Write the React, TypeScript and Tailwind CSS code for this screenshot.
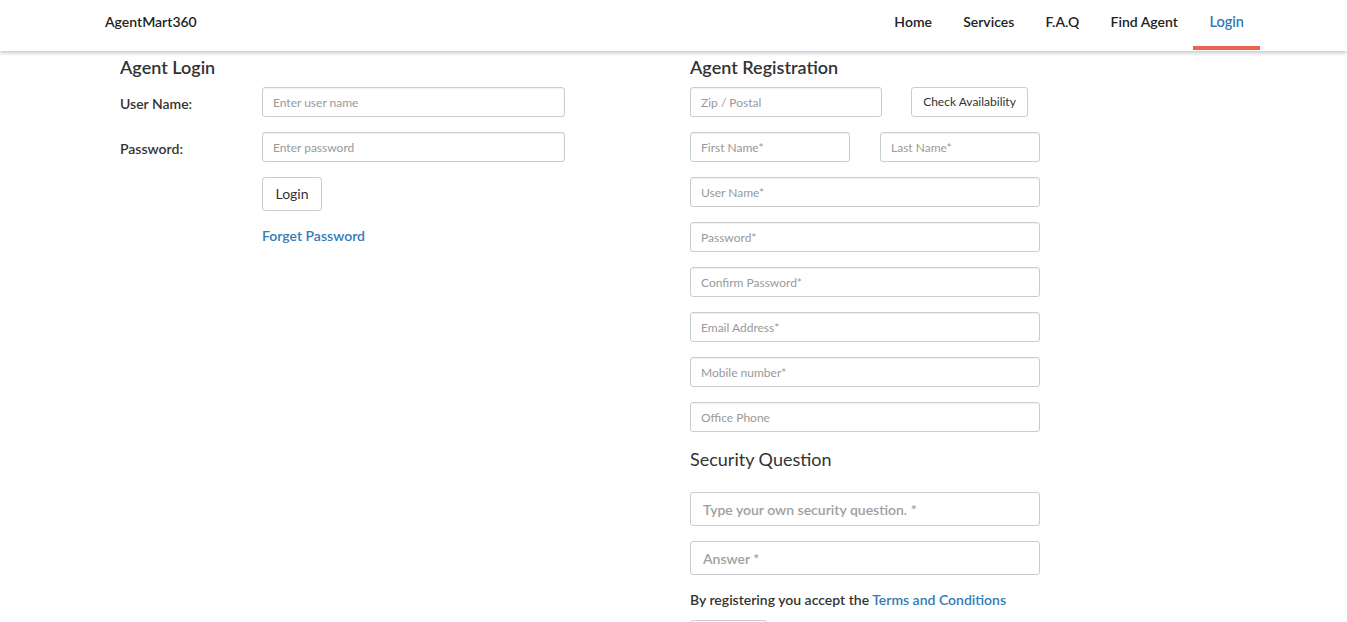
import React from "react";

const inputBase =
  "block h-[30px] rounded-[3px] border border-[#cccccc] bg-white px-[10px] text-[12px] text-[#555] placeholder:text-[#999] shadow-[inset_0_1px_1px_rgba(0,0,0,0.06)] outline-none";

export default function App() {
  return (
    <div className="min-h-[622px] bg-white text-[#333] font-['Lato','Noto_Sans',sans-serif]">
      <header className="relative z-10 flex h-[51px] items-center justify-between bg-white pl-[105px] pr-[87px] shadow-[0_2px_4px_rgba(0,0,0,0.22)]">
        <div className="pb-[9px] text-[14px] font-semibold text-[#222]">AgentMart360</div>
        <nav className="flex h-full items-stretch">
          {["Home", "Services", "F.A.Q", "Find Agent"].map((t) => (
            <a key={t} className="flex items-center px-[15.6px] pb-[8px] text-[14px] font-semibold text-[#222]">
              {t}
            </a>
          ))}
          <a className="relative flex items-center px-[16px] pb-[8px] text-[14.5px] font-semibold text-[#337ab7]">
            Login
            <span className="absolute bottom-[1px] left-0 right-0 h-[4px] bg-[#ea644f]" />
          </a>
        </nav>
      </header>

      <main className="flex pt-[5px]">
        {/* Agent Login */}
        <section className="ml-[120px] w-[570px]">
          <h2 className="h-[22px] text-[18px] font-semibold leading-[22px] text-[#333]">Agent Login</h2>
          <div className="mt-[9px] flex items-center">
            <label className="w-[142px] pt-[2px] text-[14px] font-semibold">User Name:</label>
            <input className={`${inputBase} w-[303px]`} placeholder="Enter user name" />
          </div>
          <div className="mt-[15px] flex items-center">
            <label className="w-[142px] pt-[2px] text-[14px] font-semibold">Password:</label>
            <input type="password" className={`${inputBase} w-[303px]`} placeholder="Enter password" />
          </div>
          <div className="ml-[142px]">
            <button className="mt-[15px] h-[34px] w-[60px] rounded-[3px] border border-[#cccccc] bg-white pb-[2px] text-[14px] text-[#333]">
              Login
            </button>
            <div className="mt-[15px] h-[20px] text-[14px] font-semibold leading-[20px] text-[#337ab7]">Forget Password</div>
          </div>
        </section>

        {/* Agent Registration */}
        <section className="w-[350px]">
          <h2 className="h-[22px] text-[18px] font-semibold leading-[22px] text-[#333]">Agent Registration</h2>
          <div className="mt-[9px] flex items-center">
            <input className={`${inputBase} w-[192px]`} placeholder="Zip / Postal" />
            <button className="ml-[29px] h-[30px] w-[117px] rounded-[3px] border border-[#cccccc] bg-white text-[12px] text-[#333]">
              Check Availability
            </button>
          </div>
          <div className="mt-[15px] flex justify-between">
            <input className={`${inputBase} w-[160px]`} placeholder="First Name*" />
            <input className={`${inputBase} w-[160px]`} placeholder="Last Name*" />
          </div>
          {["User Name*", "Password*", "Confirm Password*", "Email Address*", "Mobile number*", "Office Phone"].map((p) => (
            <input key={p} className={`${inputBase} mt-[15px] w-[350px]`} placeholder={p} />
          ))}
          <h3 className="mt-[14px] h-[26px] text-[18px] font-normal leading-[26px] text-[#333]">Security Question</h3>
          <input
            className="mt-[20px] block h-[34px] w-[350px] rounded-[3px] border border-[#cccccc] bg-white px-[12px] text-[14px] font-semibold placeholder:text-[#a0a0a0] outline-none"
            placeholder="Type your own security question. *"
          />
          <input
            className="mt-[15px] block h-[34px] w-[350px] rounded-[3px] border border-[#cccccc] bg-white px-[12px] text-[14px] font-semibold placeholder:text-[#a0a0a0] outline-none"
            placeholder="Answer *"
          />
          <p className="mt-[15px] h-[20px] whitespace-nowrap text-[14px] font-semibold leading-[20px] text-[#333]">
            By registering you accept the <span className="text-[#337ab7]">Terms and Conditions</span>
          </p>
          <button className="mt-[10px] h-[34px] w-[77px] rounded-[3px] border border-[#cccccc] bg-white text-[14px] text-[#333]">
            Register
          </button>
        </section>
      </main>
    </div>
  );
}
